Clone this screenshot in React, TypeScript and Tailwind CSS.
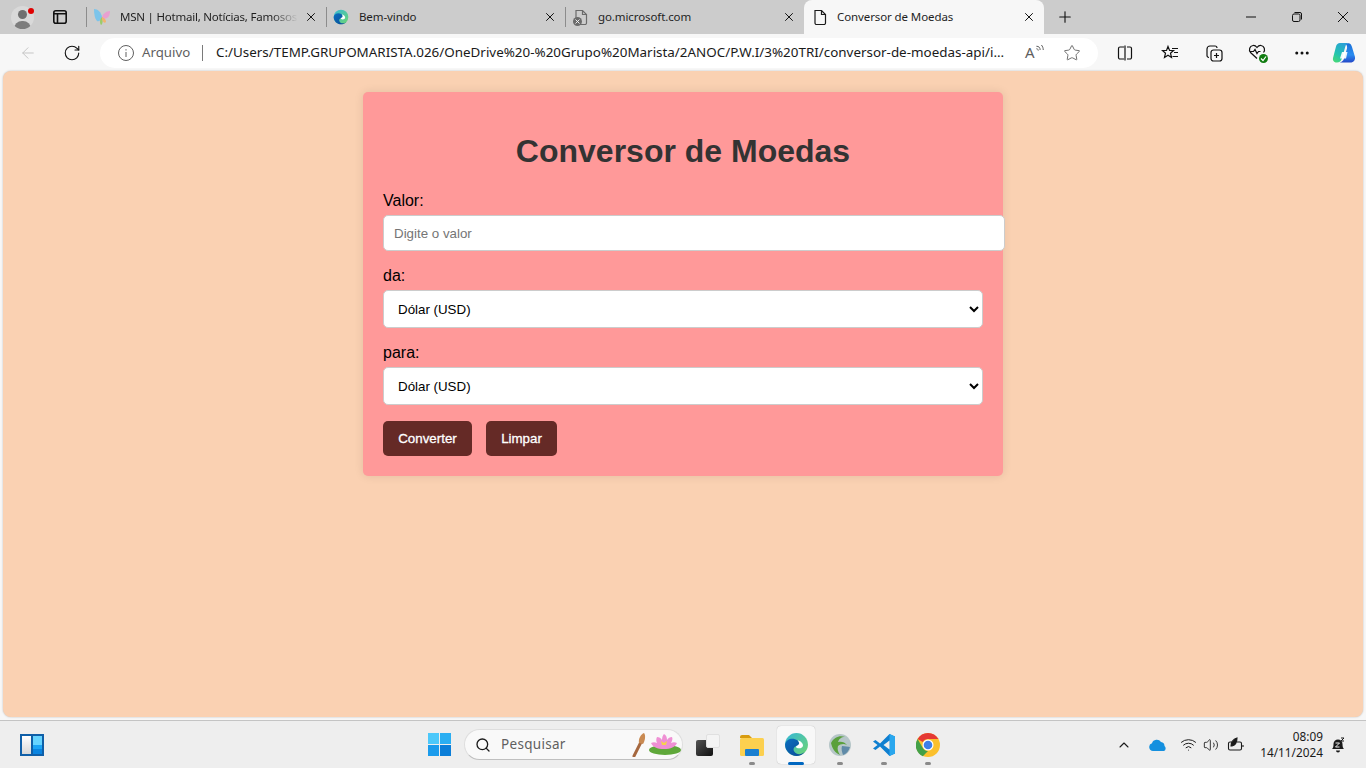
import { ArrowLeft, ChevronUp, MoreHorizontal, Plus, RotateCw, Search, Star, Volume2, Wifi, X } from "lucide-react";

function Avatar() {
  return (
    <div className="relative flex h-[23px] w-[23px] items-end justify-center overflow-hidden rounded-full bg-[#d9d9d9]">
      <div className="absolute top-[4px] h-[9px] w-[9px] rounded-full bg-[#707070]" />
      <div className="h-[8px] w-[17px] rounded-t-full bg-[#7c7c7c]" />
    </div>
  );
}

function WorkspaceIcon() {
  return (
    <svg width="16" height="16" viewBox="0 0 16 16" fill="none" stroke="#111111" strokeWidth="1.6">
      <rect x="1.800" y="1.800" width="12.400" height="12.400" rx="2" />
      <path d="M2 4.800h12M5.500 5v9" />
    </svg>
  );
}

function MsnIcon() {
  return (
    <svg width="18" height="18" viewBox="0 0 18 18">
      <path d="M1 1c4 0 7 3 8 8-1 3-3 5-5 4C2 11 1 6 1 1z" fill="#7cc4ea" />
      <path d="M17 3c-4 0-7 3-8 6 1 2 3 2 5 1 2-1 3-4 3-7z" fill="#e8a0d0" />
      <path d="M9 9c-2 2-3 5-1 8 2-1 2-5 1-8z" fill="#9ccb6a" />
      <path d="M9 9c2 1 4 2 4 5-2 2-4-1-4-5z" fill="#f3b36d" />
    </svg>
  );
}

function EdgeLogo({ size, id }: { size: number; id: string }) {
  return (
    <svg width={size} height={size} viewBox="0 0 24 24">
      <defs>
        <linearGradient id={`${id}Top`} x1="0" y1="0" x2="1" y2="1">
          <stop offset="0" stopColor="#35b7d8" />
          <stop offset="1" stopColor="#6fd66f" />
        </linearGradient>
        <linearGradient id={`${id}Bottom`} x1="0" y1="0" x2="1" y2="1">
          <stop offset="0" stopColor="#0c6fc0" />
          <stop offset="1" stopColor="#0a4a94" />
        </linearGradient>
      </defs>
      <circle cx="12" cy="12" r="11" fill={`url(#${id}Top)`} />
      <path d="M1 12C2 6 9 5 13 8c2 2 2 4 0 5-3 1-5 3-3 6 2 3 7 3 10 0-2 3-5 4-8 4C6 23 1 18 1 12z" fill={`url(#${id}Bottom)`} />
      <path d="M13 8c4 1 6 4 5 6-1 2-4 2-6 1-1-1 0-2 1-2 2-1 2-3 0-5z" fill="#fff" />
    </svg>
  );
}

function FileIcon({ muted }: { muted?: boolean }) {
  const color = muted ? "#6b6b6b" : "#1a1a1a";
  return (
    <div className="relative h-[17px] w-[16px]">
      <svg width="16" height="17" viewBox="0 0 16 17" fill="none" stroke={color} strokeWidth="1.2">
        <path d="M3 1.500h6.500L13.500 5.500V14a1.500 1.500 0 0 1-1.500 1.500H4.500A1.500 1.500 0 0 1 3 14z" />
        <path d="M9.500 1.500v4h4" />
      </svg>
      {muted && (
        <div className="absolute bottom-0 left-0 flex h-[9px] w-[9px] items-center justify-center rounded-full bg-[#6b6b6b]">
          <X className="h-[7px] w-[7px] text-white" strokeWidth={3} />
        </div>
      )}
    </div>
  );
}

function Tab({ icon, title, fade, divider = true }: { icon: React.ReactNode; title: string; fade?: boolean; divider?: boolean }) {
  return (
    <div className="flex h-[34px] w-[239px] shrink-0 items-center">
      <div className="flex w-[27px] shrink-0 justify-center">{icon}</div>
      <div className={`ml-[5px] w-[178px] shrink-0 overflow-hidden whitespace-nowrap text-[11.500px] text-[#1f1f1f] ${fade ? "tracking-[-0.22px] [mask-image:linear-gradient(to_right,black_85%,transparent)]" : "tracking-[-0.1px]"}`}>
        {title}
      </div>
      <X className="ml-[6px] h-[14px] w-[14px] shrink-0 text-[#111111]" strokeWidth={1.7} />
      {divider && <div className="ml-auto h-[20px] w-px bg-[#8c8c8c]" />}
    </div>
  );
}

function ToolIcon({ children, width }: { children: React.ReactNode; width: number }) {
  return (
    <div className="flex h-[37px] shrink-0 items-center justify-center" style={{ width }}>
      {children}
    </div>
  );
}

function CopilotLogo() {
  return (
    <svg width="24" height="24" viewBox="0 0 24 24">
      <defs>
        <linearGradient id="copilotLeft" x1="0.700" y1="0" x2="0.200" y2="1">
          <stop offset="0" stopColor="#2b9fd8" />
          <stop offset="0.600" stopColor="#22c3b0" />
          <stop offset="1" stopColor="#46d878" />
        </linearGradient>
        <linearGradient id="copilotRight" x1="0.500" y1="0" x2="0.500" y2="1">
          <stop offset="0" stopColor="#1b6fd8" />
          <stop offset="0.600" stopColor="#2a8cf0" />
          <stop offset="1" stopColor="#2448c8" />
        </linearGradient>
      </defs>
      <path d="M8 2h8.500c-1.500.5-2.500 1.500-3 3L10 17c-.8 3-2.500 4.500-5 4.500H3.500C1.500 21 .5 19 1 17L4 5.500C4.500 3.500 6 2 8 2z" fill="url(#copilotLeft)" />
      <path d="M14 3.500c1-1.200 2.500-1.500 3.500-1 1.500.5 2 2 2.500 3.500L23 16c.5 2.500-1 5-3.500 5.500H7.500c2.500-.5 4-2 4.500-4l3-10c.3-1.500 0-3-1-4z" fill="url(#copilotRight)" />
      <path d="M10 11h5.500l-1.500 6.500h-6z" fill="#ffffff" opacity="0.9" />
    </svg>
  );
}

function WidgetsIcon() {
  return (
    <div className="flex h-[22px] w-[24px] gap-[2px] border-[2px] border-[#0f5fa8] bg-[#0f5fa8]">
      <div className="h-full w-[9px] bg-gradient-to-b from-white to-[#d8d8d8]" />
      <div className="flex h-full flex-1 flex-col">
        <div className="flex-[2] bg-[#66d4ff]" />
        <div className="flex-1 bg-[#1ba4f5]" />
        <div className="flex-1 bg-[#0a84e0]" />
      </div>
    </div>
  );
}

function StartIcon() {
  return (
    <div className="grid h-[23px] w-[23px] grid-cols-2 gap-[1px]">
      <div className="bg-[#4cc8fa]" />
      <div className="bg-[#2aaef2]" />
      <div className="bg-[#1a9bec]" />
      <div className="bg-[#0b7ed8]" />
    </div>
  );
}

function ExplorerIcon() {
  return (
    <svg width="26" height="24" viewBox="0 0 26 24">
      <path d="M1 4a2 2 0 0 1 2-2h7l3 3h-12z" fill="#d89c10" />
      <rect x="1" y="5" width="24" height="18" rx="1.500" fill="#fcd04f" />
      <rect x="6" y="16" width="14" height="7" rx="1" fill="#1a7fd0" />
    </svg>
  );
}

function GlobeIcon() {
  return (
    <svg width="24" height="24" viewBox="0 0 24 24">
      <circle cx="12" cy="12" r="11" fill="#b6c6c8" />
      <path d="M3 10c3-6 9-8 14-6-4 0-6 2-7 5 3-1 7 0 9 3-3-2-7-1-9 1-1 3 0 6 2 9-5-2-8-7-9-12z" fill="#5aa03c" />
      <path d="M14 13c3 0 6 1 8 1-1 4-4 7-7 8-1-3-2-6-1-9z" fill="#5f8aa8" />
    </svg>
  );
}

function VsCodeIcon() {
  return (
    <svg width="24" height="24" viewBox="0 0 24 24">
      <path d="M17.500 1 23 3.500v17L17.500 23 8 13.500l-4.500 3.500L1 15.500 5.500 12 1 8.500 3.500 7 8 10.500z" fill="#0f7fd0" />
      <path d="M17.500 1 23 3.500v17L17.500 23z" fill="#2aa7ee" />
      <path d="M17.500 7.500 11.500 12l6 4.500z" fill="#eeeeee" />
    </svg>
  );
}

function ChromeIcon() {
  return (
    <svg width="24" height="24" viewBox="0 0 24 24">
      <circle cx="12" cy="12" r="12" fill="#fbc02d" />
      <path d="M12 0a12 12 0 0 1 10.400 6H12a6 6 0 0 0-5.200 3L1.600 6A12 12 0 0 1 12 0z" fill="#e53935" />
      <path d="M1.600 6l5.200 9a6 6 0 0 0 5.200 3l-5.200 5.300A12 12 0 0 1 1.600 6z" fill="#43a047" />
      <circle cx="12" cy="12" r="5.500" fill="#fff" />
      <circle cx="12" cy="12" r="4.300" fill="#3f7fe8" />
    </svg>
  );
}

function LotusIcon() {
  return (
    <svg width="50" height="26" viewBox="0 0 50 26">
      <path d="M2 25 9 11" stroke="#a5673f" strokeWidth="3" strokeLinecap="round" />
      <path d="M7 12c-1-4 2-9 5-10 2 2 1 8-1 11z" fill="#c98a52" />
      <ellipse cx="33" cy="19" rx="16" ry="5" fill="#5fa83a" />
      <path d="M32 18c-7 0-11-2-13-6 2-1 4-1 6 0-1-2-1-4 0-6 2 0 4 1 5 3 0-3 1-5 2-6 2 1 3 3 3 6 1-2 3-3 5-3 1 2 0 4-1 6 2-1 4-1 6 0-2 4-6 6-13 6z" fill="#ef90d4" />
      <path d="M29 10l3 2 3-2-1 4h-4z" fill="#f7d34a" />
    </svg>
  );
}

function TaskItem({ children, active, open }: { children: React.ReactNode; active?: boolean; open?: boolean }) {
  return (
    <div className={`relative mx-[3px] flex h-[38px] w-[38px] shrink-0 items-center justify-center rounded-[4px] ${active ? "bg-[#f8f8f8] shadow-[0_0_1px_rgba(0,0,0,0.3)]" : ""}`}>
      {children}
      {open && <div className={`absolute bottom-[-1px] h-[3px] rounded-full ${active ? "w-[16px] bg-[#0067c0]" : "w-[6px] bg-[#8a8a8a]"}`} />}
    </div>
  );
}

function Field({ label, children }: { label: string; children: React.ReactNode }) {
  return (
    <div className="mb-[15px]">
      <label className="mb-[4px] block text-[16px] leading-[20px] text-black">{label}</label>
      {children}
    </div>
  );
}

function CurrencySelect() {
  return (
    <select className="block h-[38px] w-[600px] rounded-[5px] border border-[#cccccc] bg-white px-[10px] text-[13.330px] text-black">
      <option>Dólar (USD)</option>
      <option>Real (BRL)</option>
      <option>Euro (EUR)</option>
    </select>
  );
}

export default function App() {
  return (
    <div className="flex h-[768px] w-[1366px] flex-col overflow-hidden bg-[#f7f7f7] font-['Noto_Sans',sans-serif]">
      {/* tab strip */}
      <div className="flex h-[34px] shrink-0 items-center bg-[#cccccc]">
        <div className="relative flex w-[44px] shrink-0 justify-center">
          <Avatar />
          <div className="absolute left-[28px] top-[2px] h-[6px] w-[6px] rounded-full bg-[#e00000]" />
        </div>
        <div className="flex w-[32px] shrink-0 justify-center">
          <WorkspaceIcon />
        </div>
        <div className="flex w-[12px] shrink-0 justify-end">
          <div className="mr-px h-[20px] w-px bg-[#8c8c8c]" />
        </div>
        <Tab icon={<MsnIcon />} title="MSN | Hotmail, Notícias, Famosos" fade />
        <Tab icon={<EdgeLogo size={16} id="edgeTab" />} title="Bem-vindo" />
        <Tab icon={<div className="ml-[2px]"><FileIcon muted /></div>} title="go.microsoft.com" divider={false} />
        <div className="-ml-px flex h-[34px] w-[240px] shrink-0 items-center rounded-t-[8px] bg-[#f7f7f7]">
          <div className="flex w-[33px] shrink-0 justify-end pr-[9px]">
            <FileIcon />
          </div>
          <div className="w-[176px] shrink-0 text-[11.500px] tracking-[-0.1px] text-[#1f1f1f]">Conversor de Moedas</div>
          <X className="ml-[9px] h-[14px] w-[14px] shrink-0 text-[#111111]" strokeWidth={1.7} />
        </div>
        <Plus className="ml-[12px] h-[18px] w-[18px] text-[#111111]" strokeWidth={1.5} />
        <div className="ml-auto flex">
          <div className="flex w-[46px] justify-center">
            <svg width="12" height="12" viewBox="0 0 12 12" stroke="#111111" strokeWidth="1">
              <path d="M1 6h10" />
            </svg>
          </div>
          <div className="flex w-[46px] justify-center">
            <svg width="12" height="12" viewBox="0 0 12 12" fill="none" stroke="#111111" strokeWidth="1">
              <rect x="1.500" y="3" width="7.500" height="7.500" rx="1.500" />
              <path d="M3.500 1.500h5.500a1.500 1.500 0 0 1 1.500 1.500v5.500" />
            </svg>
          </div>
          <div className="flex w-[46px] justify-center">
            <svg width="12" height="12" viewBox="0 0 12 12" stroke="#111111" strokeWidth="1">
              <path d="M1 1l10 10M11 1 1 11" />
            </svg>
          </div>
        </div>
      </div>

      {/* toolbar */}
      <div className="flex h-[37px] shrink-0 items-center">
        <ToolIcon width={56}>
          <ArrowLeft className="h-[18px] w-[18px] text-[#c4c4c4]" strokeWidth={1.3} />
        </ToolIcon>
        <ToolIcon width={32}>
          <RotateCw className="h-[18px] w-[18px] text-[#111111]" strokeWidth={1.5} />
        </ToolIcon>
        <div className="ml-[12px] flex h-[30px] w-[998px] shrink-0 items-center rounded-full bg-white pl-[18px]">
          <svg width="16" height="16" viewBox="0 0 16 16" fill="none" stroke="#5f5f5f" strokeWidth="1">
            <circle cx="8" cy="8" r="7.500" />
            <path d="M8 7v5M8 4.200v1.300" />
          </svg>
          <span className="ml-[8px] w-[48px] shrink-0 whitespace-nowrap text-[13.250px] leading-none text-[#5f5f5f]">Arquivo</span>
          <div className="ml-[12px] h-[16px] w-px shrink-0 bg-[#7a7a7a]" />
          <span className="ml-[13px] w-[789px] shrink-0 whitespace-nowrap text-[13.420px] leading-none text-[#1a1a1a]">
            C:/Users/TEMP.GRUPOMARISTA.026/OneDrive%20-%20Grupo%20Marista/2ANOC/P.W.I/3%20TRI/conversor-de-moedas-api/i...
          </span>
          <span className="ml-[20px] flex w-[20px] shrink-0 items-start text-[15px] leading-none text-[#5f5f5f]">
            A
            <svg width="9" height="10" viewBox="0 0 7 8" fill="none" stroke="#5f5f5f" strokeWidth="0.800">
              <path d="M1 1c2 0 3 1 3 3M1 3c1 0 1.500.5 1.500 1.500M5 0c1 1 1.500 2.500 1.500 4" />
            </svg>
          </span>
          <Star className="ml-[18px] h-[18px] w-[18px] shrink-0 text-[#5f5f5f]" strokeWidth={1.2} />
        </div>
        <div className="ml-[5px] flex items-center">
          <ToolIcon width={44}>
            <svg width="16" height="16" viewBox="0 0 16 16" fill="none" stroke="#111111" strokeWidth="1.200">
              <path d="M7 2H3a1.500 1.500 0 0 0-1.500 1.500v9A1.500 1.500 0 0 0 3 14h4M10 2h3a1.500 1.500 0 0 1 1.500 1.500v9A1.500 1.500 0 0 1 13 14h-3M8 .5v15" />
            </svg>
          </ToolIcon>
          <ToolIcon width={45}>
            <svg width="18" height="18" viewBox="0 0 18 18" fill="none" stroke="#111111" strokeWidth="1.200">
              <path d="M7 2.500l1.600 4H12.500L9.500 9.200l1 4.300L7 11.300 3.500 13.500l1-4.300L1.500 6.500h4z" />
              <path d="M11 4.500h6M13 8.500h4M11.500 12.500h5.500" />
            </svg>
          </ToolIcon>
          <ToolIcon width={44}>
            <svg width="18" height="18" viewBox="0 0 18 18" fill="none" stroke="#111111" strokeWidth="1.200">
              <path d="M4 13.500A2 2 0 0 1 2 11.500V5a3 3 0 0 1 3-3h5a2 2 0 0 1 2 2" />
              <rect x="6" y="6" width="11" height="11" rx="2.500" />
              <path d="M11.500 9v5M9 11.500h5" />
            </svg>
          </ToolIcon>
          <ToolIcon width={44}>
            <div className="relative h-[18px] w-[20px]">
              <svg width="18" height="16" viewBox="0 0 18 16" fill="none" stroke="#111111" strokeWidth="1.200">
                <path d="M9 14.500 2.500 8.500C.5 6 1.500 2 5 1.500c1.700-.2 3 .7 4 2 1-1.300 2.300-2.200 4-2 3.500.5 4.500 4.500 2.500 7" />
                <path d="M2 7.500h3.500l1.500-2 2 4 1.500-2h2" />
              </svg>
              <div className="absolute bottom-[-1px] right-0 flex h-[9px] w-[9px] items-center justify-center rounded-full bg-[#107c10]">
                <svg width="7" height="7" viewBox="0 0 7 7" fill="none" stroke="#fff" strokeWidth="1.200">
                  <path d="M1 3.500 3 5.500 6 1.500" />
                </svg>
              </div>
            </div>
          </ToolIcon>
          <ToolIcon width={44}>
            <MoreHorizontal className="h-[18px] w-[18px] text-[#111111]" strokeWidth={2} />
          </ToolIcon>
          <ToolIcon width={40}>
            <CopilotLogo />
          </ToolIcon>
        </div>
      </div>

      {/* page */}
      <div className="mx-[3px] h-[646px] shrink-0 rounded-[8px] bg-[#fad1b2] pt-[21px] font-['Liberation_Sans',Arial,sans-serif] shadow-[0_0_2px_rgba(0,0,0,0.25)]">
        <div className="ml-[360px] h-[384px] w-[640px] rounded-[5px] bg-[#ff9999] p-[20px] shadow-[0_0_10px_rgba(0,0,0,0.1)]">
          <h1 className="mb-[21px] mt-[21px] text-center text-[32px] font-bold leading-[37px] text-[#333333]">Conversor de Moedas</h1>
          <Field label="Valor:">
            <input
              type="text"
              placeholder="Digite o valor"
              className="block h-[36px] w-[622px] rounded-[5px] border border-[#cccccc] bg-white px-[10px] text-[13.330px] text-black placeholder:text-[#757575]"
            />
          </Field>
          <Field label="da:">
            <CurrencySelect />
          </Field>
          <Field label="para:">
            <CurrencySelect />
          </Field>
          <div className="mt-[16px] flex gap-[14px]">
            <button className="h-[35px] w-[89px] rounded-[5px] bg-[#652a26] text-[13.330px] text-white [-webkit-text-stroke:0.3px_white]">Converter</button>
            <button className="h-[35px] w-[71px] rounded-[5px] bg-[#652a26] text-[13.330px] text-white [-webkit-text-stroke:0.3px_white]">Limpar</button>
          </div>
        </div>
      </div>

      {/* taskbar */}
      <div className="mt-[3px] flex h-[48px] shrink-0 items-center border-t border-[#c4c4c4] bg-[#eeeeee]">
        <div className="ml-[20px] w-[24px] shrink-0">
          <WidgetsIcon />
        </div>
        <div className="ml-[384px] flex w-[23px] shrink-0 justify-center">
          <StartIcon />
        </div>
        <div className="ml-[13px] flex h-[31px] w-[219px] shrink-0 items-center rounded-full border border-[#dedede] border-b-[#c0c0c0] bg-[#f9f9f9] pl-[10px]">
          <Search className="h-[16px] w-[16px] text-[#1a1a1a]" strokeWidth={2} />
          <span className="ml-[10px] w-[62px] shrink-0 text-[13.500px] tracking-[0.3px] text-[#5f5f5f]">Pesquisar</span>
          <div className="ml-[69px] shrink-0 pb-[1px]">
            <LotusIcon />
          </div>
        </div>
        <div className="ml-[3px] flex w-[44px] shrink-0 justify-center">
          <div className="relative h-[22px] w-[24px]">
            <div className="absolute bottom-0 left-0 h-[16px] w-[17px] rounded-[2px] bg-gradient-to-br from-[#555555] to-[#111111]" />
            <div className="absolute right-0 top-0 h-[14px] w-[14px] rounded-[2px] border border-[#e0e0e0] bg-[#f4f4f4]" />
          </div>
        </div>
        <div className="flex shrink-0">
          <TaskItem open><ExplorerIcon /></TaskItem>
          <TaskItem active open><EdgeLogo size={25} id="edgeTask" /></TaskItem>
          <TaskItem open><GlobeIcon /></TaskItem>
          <TaskItem open><VsCodeIcon /></TaskItem>
          <TaskItem open><ChromeIcon /></TaskItem>
        </div>
        <ChevronUp className="ml-[166px] h-[16px] w-[16px] shrink-0 text-[#1a1a1a]" strokeWidth={1.6} />
        <svg className="ml-[17px] shrink-0" width="18" height="12" viewBox="0 0 18 12">
          <path d="M4 12a4 4 0 0 1-1-7.800A5 5 0 0 1 12 3a4 4 0 0 1 3.500 4A3 3 0 0 1 15 12z" fill="#1490df" />
        </svg>
        <Wifi className="ml-[13px] h-[17px] w-[17px] shrink-0 text-[#1a1a1a]" strokeWidth={1.4} />
        <Volume2 className="ml-[6px] h-[16px] w-[16px] shrink-0 text-[#1a1a1a]" strokeWidth={1.3} />
        <svg className="ml-[8px] shrink-0" width="18" height="16" viewBox="0 0 18 16" fill="none" stroke="#1a1a1a" strokeWidth="1.100">
          <path d="M5 5H3a1.500 1.500 0 0 0-1.500 1.500v5A1.500 1.500 0 0 0 3 13h10a1.500 1.500 0 0 0 1.500-1.500v-5A1.500 1.500 0 0 0 13 5h-3M16 8v2" />
          <path d="M4 9c0-4 3-7 6-8 0 4-1 7-5 8z" fill="#1a1a1a" />
        </svg>
        <div className="mb-[2px] ml-[9px] w-[69px] shrink-0 text-right text-[11.800px] leading-[16px] text-[#1a1a1a]">
          <div>08:09</div>
          <div>14/11/2024</div>
        </div>
        <svg className="ml-[8px] shrink-0" width="14" height="16" viewBox="0 0 14 16">
          <path d="M1 12c1-1 1.500-2 1.500-5a4.500 4.500 0 0 1 9 0c0 3 .5 4 1.500 5z" fill="#1a1a1a" />
          <path d="M5 13.500a2 2 0 0 0 4 0z" fill="#1a1a1a" />
          <path d="M4.500 6h4l-4 4h4" stroke="#eeeeee" strokeWidth="1" fill="none" />
          <path d="M10 1h3l-3 3h3" stroke="#1a1a1a" strokeWidth="1" fill="none" />
        </svg>
      </div>
    </div>
  );
}
